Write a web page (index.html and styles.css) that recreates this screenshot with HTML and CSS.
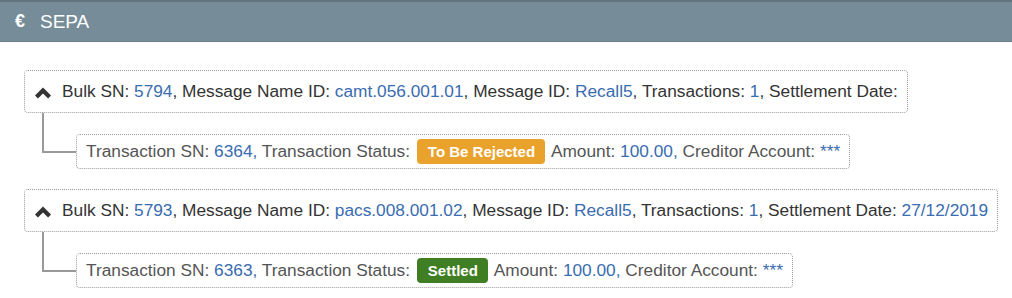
FILE: index.html
```html
<!DOCTYPE html>
<html>
<head>
<meta charset="utf-8">
<link rel="stylesheet" href="styles.css">
</head>
<body>
<div class="header"><span class="euro">€</span><span class="title">SEPA</span></div>
<div class="content">
  <div class="group">
    <div class="bulk">
      <svg class="chev" viewBox="0 0 16 12" width="16" height="12"><path d="M0 8.6 L8 0.6 L16 8.6 L13.1 11.5 L8 6.4 L2.9 11.5 Z" fill="#333"/></svg>
      <span>Bulk SN: <span class="v">5794</span>, Message Name ID: <span class="v">camt.056.001.01</span>, Message ID: <span class="v">Recall5</span>, Transactions: <span class="v">1</span>, Settlement Date:</span>
    </div>
    <div class="child">
      <div class="conn"></div>
      <div class="tx">Transaction SN: <span class="v">6364,</span> Transaction Status: <span class="badge warn">To Be Rejected</span> Amount: <span class="v">100.00,</span> Creditor Account: <span class="v">***</span></div>
    </div>
  </div>
  <div class="group">
    <div class="bulk">
      <svg class="chev" viewBox="0 0 16 12" width="16" height="12"><path d="M0 8.6 L8 0.6 L16 8.6 L13.1 11.5 L8 6.4 L2.9 11.5 Z" fill="#333"/></svg>
      <span>Bulk SN: <span class="v">5793</span>, Message Name ID: <span class="v">pacs.008.001.02</span>, Message ID: <span class="v">Recall5</span>, Transactions: <span class="v">1</span>, Settlement Date: <span class="v">27/12/2019</span></span>
    </div>
    <div class="child">
      <div class="conn"></div>
      <div class="tx">Transaction SN: <span class="v">6363,</span> Transaction Status: <span class="badge ok">Settled</span> Amount: <span class="v">100.00,</span> Creditor Account: <span class="v">***</span></div>
    </div>
  </div>
</div>
</body>
</html>
```
FILE: styles.css
```css
html, body {
  margin: 0;
  padding: 0;
  background: #fff;
  font-family: "Liberation Sans", Arial, sans-serif;
}
.header {
  height: 39px;
  border-top: 2px solid #62747e;
  border-bottom: 1px solid #6a7f8a;
  background: #768d99;
  color: #fff;
  display: flex;
  align-items: center;
  padding-left: 15px;
  font-size: 19px;
}
.euro {
  font-weight: bold;
  font-size: 18px;
  width: 25px;
}
.content {
  padding: 28px 0 0 24px;
}
.group {
  margin-bottom: 20px;
}
.bulk {
  display: inline-flex;
  align-items: center;
  height: 41px;
  padding: 0 9px 0 10px;
  border: 1px dotted #9a9a9a;
  border-radius: 4px;
  color: #333;
  font-size: 17.3px;
}
.chev {
  flex-shrink: 0;
  width: 16px;
  height: 12px;
  margin-right: 11px;
  margin-top: 2px;
}
.v {
  color: #3a6cb0;
}
.child {
  display: flex;
  align-items: flex-start;
  margin-left: 18px;
}
.conn {
  width: 32px;
  height: 38px;
  border-left: 2px solid #999;
  border-bottom: 2px solid #999;
}
.tx {
  margin-top: 21px;
  height: 33px;
  display: inline-flex;
  align-items: center;
  white-space: pre;
  padding: 0 9px;
  border: 1px dotted #9a9a9a;
  border-radius: 4px;
  color: #555;
  font-size: 17.3px;
}
.badge {
  display: inline-block;
  color: #fff;
  font-weight: bold;
  font-size: 15px;
  padding: 4px 10px 4px 11px;
  margin: 0 2px 0 2px;
  border-radius: 4px;
  line-height: 17px;
}
.warn { background: #e9a22b; }
.ok { background: #3f7e22; }
```
